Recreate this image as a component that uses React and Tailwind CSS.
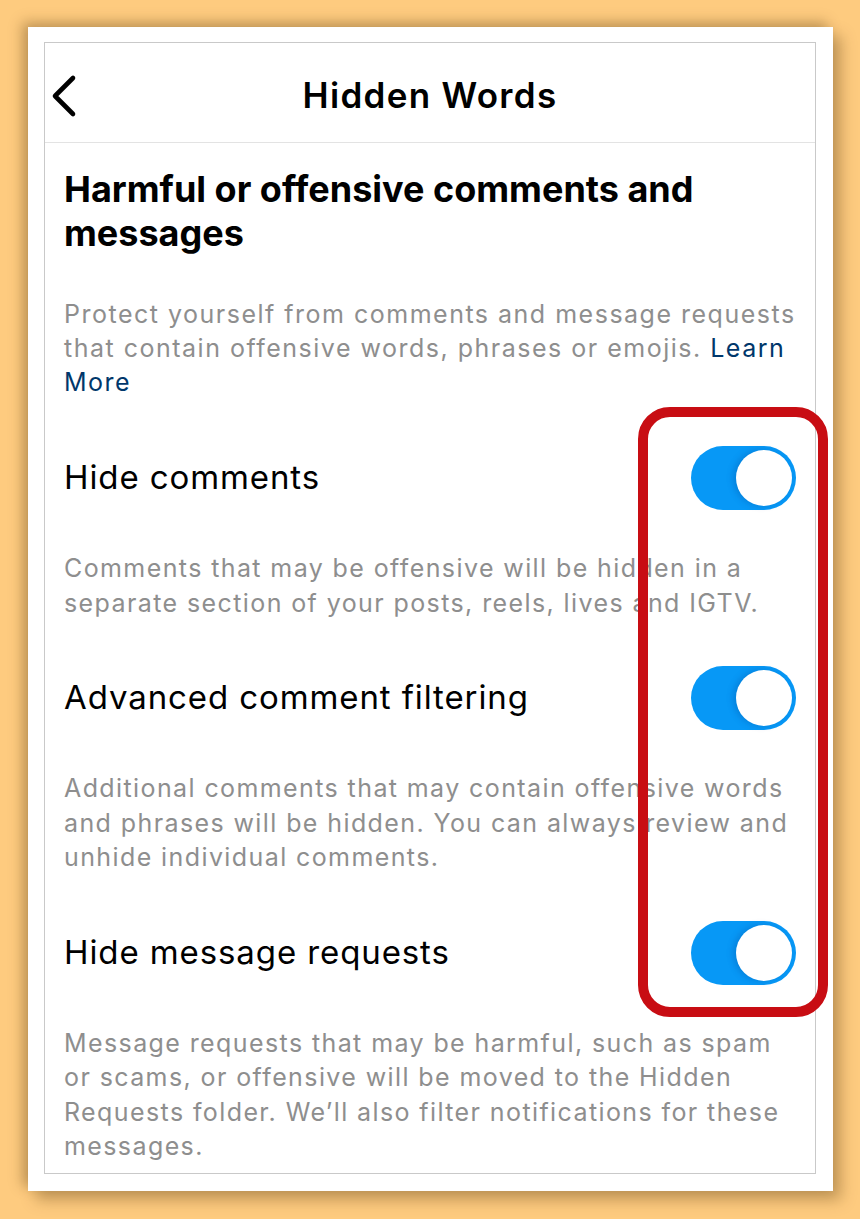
import React from 'react';

const ROWS = [
  {
    label: 'Hide comments',
    lines: [
      'Comments that may be offensive will be hidden in a',
      'separate section of your posts, reels, lives and IGTV.',
    ],
  },
  {
    label: 'Advanced comment filtering',
    lines: [
      'Additional comments that may contain offensive words',
      'and phrases will be hidden. You can always review and',
      'unhide individual comments.',
    ],
  },
  {
    label: 'Hide message requests',
    lines: [
      'Message requests that may be harmful, such as spam',
      'or scams, or offensive will be moved to the Hidden',
      'Requests folder. We\u2019ll also filter notifications for these',
      'messages.',
    ],
  },
];

function Toggle() {
  return (
    <div className="w-[105px] h-[64px] rounded-full bg-[#0798f6] flex items-center justify-end pr-[4px] shrink-0">
      <div className="w-[56px] h-[56px] rounded-full bg-white shadow-[-3px_0_6px_rgba(0,60,140,0.25)]"></div>
    </div>
  );
}

export default function App() {
  return (
    <div
      className="min-h-screen bg-[#fecb7f] pt-[27px] pl-[28px] pb-[28px]"
      style={{ fontFamily: 'Inter, "Noto Sans", sans-serif' }}
    >
      <div className="relative w-[805px] h-[1164px] bg-white pt-[15px] pl-[16px] pr-[17px] pb-[17px] shadow-[-6px_-5px_12px_rgba(90,60,20,0.35),8px_9px_14px_rgba(90,60,20,0.35)]">
        <div className="h-full border border-[#c9c9c9] overflow-hidden">
          {/* header */}
          <div className="relative h-[100px] border-b border-[#e3e3e3] flex items-center justify-center pt-[6px]">
            <svg className="absolute left-[4px] top-[31px]" width="34" height="44" viewBox="0 0 34 44" fill="none">
              <path d="M24 4 L6 22 L24 40" stroke="#000" strokeWidth="4.6" strokeLinecap="round" strokeLinejoin="round" />
            </svg>
            <h1 className="text-[35px] font-semibold text-black tracking-[1.3px]">Hidden Words</h1>
          </div>

          <div className="px-[19px]">
            <h2 className="pt-[24px] text-[36px] leading-[44px] font-bold text-black tracking-[0px]">
              Harmful or offensive comments and
              <br />
              messages
            </h2>
            <p className="mt-[42px] text-[25px] leading-[34px] text-[#8e8e8e] tracking-[1.5px] whitespace-nowrap">
              Protect yourself from comments and message requests
              <br />
              that contain offensive words, phrases or emojis. <span className="text-[#00376b]">Learn</span>
              <br />
              <span className="text-[#00376b]">More</span>
            </p>

            {ROWS.map((row, i) => (
              <div key={row.label}>
                <div className={`flex items-center justify-between h-[64px] ${i === 0 ? 'mt-[47px]' : 'mt-[46px]'}`}>
                  <span className="text-[33px] text-black tracking-[0.9px]">{row.label}</span>
                  <Toggle />
                </div>
                <p className="mt-[41px] text-[25px] leading-[34.5px] text-[#8e8e8e] tracking-[1.4px] whitespace-nowrap">
                  {row.lines.map((line) => (
                    <span key={line} className="block">{line}</span>
                  ))}
                </p>
              </div>
            ))}
          </div>
        </div>

        {/* highlight box */}
        <div className="absolute left-[610px] top-[380px] w-[190px] h-[610px] border-[10px] border-[#c80d13] rounded-[32px] pointer-events-none"></div>
      </div>
    </div>
  );
}
